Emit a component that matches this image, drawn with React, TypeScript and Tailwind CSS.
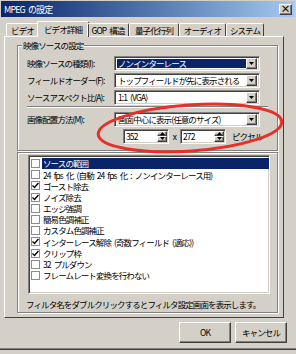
const font = "font-['MS_UI_Gothic','Noto_Sans_CJK_JP',sans-serif]"

const tabs = [
  { label: "ビデオ", w: "w-[33px]" },
  { label: "ビデオ詳細", w: "w-[52px]", active: true },
  { label: "GOP 構造", w: "w-[42px]" },
  { label: "量子化行列", w: "w-[50px]" },
  { label: "オーディオ", w: "w-[47px]" },
  { label: "システム", w: "w-[38px]" },
]

const filters = [
  { label: "ソースの範囲", checked: false, selected: true },
  { label: "24 fps 化 (自動 24 fps 化 : ノンインターレース用)", checked: false },
  { label: "ゴースト除去", checked: true },
  { label: "ノイズ除去", checked: true },
  { label: "エッジ強調", checked: false },
  { label: "簡易色調補正", checked: false },
  { label: "カスタム色調補正", checked: false },
  { label: "インターレース解除 (奇数フィールド (適応))", checked: true },
  { label: "クリップ枠", checked: true },
  { label: "32 プルダウン", checked: false },
  { label: "フレームレート変換を行わない", checked: false },
]

const Sunken = "border border-t-[#808080] border-l-[#808080] border-b-white border-r-white shadow-[inset_1px_1px_0_#404040,inset_-1px_-1px_0_#d4d0c8]"
const Raised = "border border-t-white border-l-white border-b-[#404040] border-r-[#404040] shadow-[inset_-1px_-1px_0_#808080]"

const Arrow = ({ dir }: { dir: "down" | "up" }) => (
  <svg width="5" height="3" viewBox="0 0 5 3">
    {dir === "down" ? <path d="M0 0h5L2.5 3z" fill="#000" /> : <path d="M0 3h5L2.5 0z" fill="#000" />}
  </svg>
)

const Select = ({ value, highlight }: { value: string; highlight?: boolean }) => (
  <div className={`w-[146px] h-[15px] bg-white flex items-center p-[2px] ${Sunken}`}>
    <div className={`flex-1 h-full flex items-center px-[1px] whitespace-nowrap ${highlight ? "bg-[#0a246a] text-white" : "text-black"}`}>
      {value}
    </div>
    <div className={`w-[11px] h-[11px] bg-[#d4d0c8] flex items-center justify-center ${Raised}`}>
      <Arrow dir="down" />
    </div>
  </div>
)

const Spin = ({ value }: { value: string }) => (
  <div className={`w-[46px] h-[15px] bg-white flex items-center p-[1px] ${Sunken}`}>
    <span className="flex-1 pl-[1px]">{value}</span>
    <div className="w-[10px] h-full flex flex-col">
      <div className={`flex-1 bg-[#d4d0c8] flex items-center justify-center ${Raised}`}>
        <Arrow dir="up" />
      </div>
      <div className={`flex-1 bg-[#d4d0c8] flex items-center justify-center ${Raised}`}>
        <Arrow dir="down" />
      </div>
    </div>
  </div>
)

const Check = ({ checked }: { checked: boolean }) => (
  <div className="w-[9px] h-[9px] border border-[#8c8c8c] bg-white flex items-center justify-center shrink-0">
    {checked && (
      <svg width="7" height="7" viewBox="0 0 7 7">
        <path d="M0.5 3.5L2.5 5.5L6.5 1" stroke="#000" strokeWidth="1.4" fill="none" />
      </svg>
    )}
  </div>
)

const Row = ({ label, children }: { label: string; children: React.ReactNode }) => (
  <div className="flex items-center h-[16px] mb-[1px]">
    <span className="w-[96px] pl-[9px] whitespace-nowrap">{label}</span>
    {children}
  </div>
)

const Button = ({ label }: { label: string }) => (
  <div className={`w-[52px] h-[21px] bg-[#d4d0c8] flex items-center justify-center ${Raised}`}>
    {label}
  </div>
)

export default function App() {
  return (
    <div className={`w-[296px] h-[354px] bg-[#d4d0c8] relative overflow-hidden flex flex-col text-[8.5px] tracking-[-0.9px] [word-spacing:2px] leading-none text-black ${font}`}>
      {/* title bar */}
      <div className="h-[16px] mx-[1px] mt-[1px] flex items-center justify-between pl-[3px] pr-[3px] bg-gradient-to-r from-[#0a246a] to-[#a6caf0]">
        <span className="text-white text-[9px]">MPEG の設定</span>
        <div className={`w-[13px] h-[11px] bg-[#d4d0c8] flex items-center justify-center text-[10px] font-bold tracking-normal ${Raised}`}>
          ×
        </div>
      </div>

      {/* tabs */}
      <div className="flex items-end pl-[6px] mt-[4px] h-[15px] relative z-10">
        {tabs.map((t) =>
          t.active ? (
            <div
              key={t.label}
              className={`${t.w} h-[16px] -mx-[2px] -mb-[1px] bg-[#d4d0c8] border-t border-l border-r border-t-white border-l-white border-r-[#404040] rounded-t-[2px] flex items-center justify-center whitespace-nowrap`}
            >
              {t.label}
            </div>
          ) : (
            <div
              key={t.label}
              className={`${t.w} h-[13px] border-t border-l border-r border-t-white border-l-white border-r-[#404040] rounded-t-[2px] flex items-center justify-center whitespace-nowrap`}
            >
              {t.label}
            </div>
          )
        )}
      </div>

      {/* panel */}
      <div className="ml-[4px] w-[280px] h-[282px] border border-t-white border-l-white border-b-[#404040] border-r-[#404040] flex flex-col pl-[12px] pt-[8px]">
        {/* group 1 */}
        <div className="w-[261px] h-[106px] border border-[#808080] shadow-[inset_1px_1px_0_#fff,1px_1px_0_#fff] relative pt-[9px]">
          <span className="absolute -top-[5px] left-[4px] bg-[#d4d0c8] px-[1px]">映像ソースの設定</span>
          <Row label="映像ソースの種類(I):">
            <Select value="ノンインターレース" highlight />
          </Row>
          <Row label="フィールドオーダー(F):">
            <Select value="トップフィールドが先に表示される" />
          </Row>
          <Row label="ソースアスペクト比(A):">
            <Select value="1:1 (VGA)" />
          </Row>
          <div className="ml-[9px] mr-[9px] mt-[1px] mb-[3px] h-[2px] border-t border-[#808080] border-b border-b-white" />
          <Row label="画像配置方法(M):">
            <Select value="画面中心に表示(任意のサイズ)" />
          </Row>
          <div className="flex items-center h-[16px] mt-[1px] pl-[105px]">
            <Spin value="352" />
            <span className="w-[11px] text-center">x</span>
            <Spin value="272" />
            <span className="ml-[6px]">ピクセル</span>
          </div>
        </div>

        {/* group 2 */}
        <div className="w-[261px] h-[161px] mt-[1px] border border-[#808080] shadow-[inset_1px_1px_0_#fff,1px_1px_0_#fff] flex flex-col pt-[2px] pl-[10px]">
          <div className={`w-[242px] h-[139px] bg-white flex flex-col pt-[2px] pl-[1px] ${Sunken}`}>
            {filters.map((f) => (
              <div key={f.label} className="flex items-center h-[11.2px] gap-[1px]">
                <div className="pl-[1px] pr-[1px]">
                  <Check checked={f.checked} />
                </div>
                <span
                  className={`flex-1 h-full flex items-center pl-[1px] whitespace-nowrap ${f.selected ? "bg-[#0a246a] text-white" : ""}`}
                >
                  {f.label}
                </span>
              </div>
            ))}
          </div>
          <div className="mt-[6px] -ml-[2px] whitespace-nowrap">フィルタ名をダブルクリックするとフィルタ設定画面を表示します。</div>
        </div>
      </div>

      {/* buttons */}
      <div className="flex justify-end gap-[4px] pr-[9px] mt-[4px]">
        <Button label="OK" />
        <Button label="キャンセル" />
      </div>

      {/* window bottom frame */}
      <div className="mt-auto mb-[4px] h-[2px] border-t border-[#808080] border-b border-b-[#404040]" />

      {/* annotation */}
      <svg className="absolute left-0 top-0 pointer-events-none" width="296" height="354">
        <ellipse cx="190" cy="128" rx="92" ry="23" transform="rotate(-4 190 128)" fill="none" stroke="#e8302a" strokeWidth="3" />
      </svg>
    </div>
  )
}
